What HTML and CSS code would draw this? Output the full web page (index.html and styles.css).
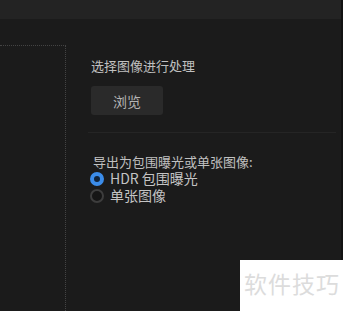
FILE: index.html
```html
<!DOCTYPE html>
<html lang="zh-CN">
<head>
    <meta charset="UTF-8">
    <title>HDR</title>
    <link rel="stylesheet" href="styles.css">
</head>
<body>
    <div class="window">
        <div class="title-bar"></div>
        <div class="main">
            <div class="preview"></div>
            <div class="options">
                <div class="label">选择图像进行处理</div>
                <button class="browse-btn">浏览</button>
                <div class="divider"></div>
                <div class="label export-label">导出为包围曝光或单张图像:</div>
                <div class="radio-row">
                    <span class="radio checked"></span>
                    <span class="radio-text">HDR 包围曝光</span>
                </div>
                <div class="radio-row">
                    <span class="radio"></span>
                    <span class="radio-text">单张图像</span>
                </div>
            </div>
        </div>
        <!-- watermark -->
        <div class="watermark">软件技巧</div>
    </div>
</body>
</html>
```

FILE: styles.css
```css
* {
    margin: 0;
    padding: 0;
    box-sizing: border-box;
}
body {
    width: 343px;
    height: 311px;
    overflow: hidden;
    background: #1b1b1b;
    font-family: "Noto Sans CJK SC", "Noto Sans", sans-serif;
    color: #c4c4c4;
}
.window {
    position: relative;
    height: 311px;
    border-right: 2px solid #121212;
}
.title-bar {
    height: 19px;
    background: #232323;
}
.main {
    display: flex;
    height: 292px;
}
.preview {
    width: 66px;
    margin-top: 26px;
    border-top: 1px dotted #444;
    border-right: 1px dotted #444;
}
.options {
    flex: 1;
    padding: 38px 5px 0 22px;
}
.label {
    padding-left: 3px;
    font-size: 13px;
    line-height: 17px;
    color: #c0c0c0;
}
.browse-btn {
    display: block;
    width: 72px;
    height: 29px;
    margin: 12px 0 0 3px;
    background: #2a2a2a;
    border: none;
    border-radius: 3px;
    font-family: inherit;
    font-size: 14px;
    color: #b4b4b4;
}
.divider {
    height: 1px;
    margin-top: 17px;
    background: #252525;
}
.export-label {
    margin-top: 20px;
    padding-left: 5px;
}
.radio-row {
    display: flex;
    align-items: center;
    gap: 6px;
    height: 17px;
    padding-left: 2px;
}
.radio {
    width: 14px;
    height: 14px;
    border-radius: 50%;
    border: 2px solid #3d3d3d;
    background: #151515;
}
.radio.checked {
    border: 4px solid #3b8ce9;
    background: #10233a;
}
.radio-text {
    font-size: 14px;
    line-height: 17px;
    color: #c4c4c4;
}
.watermark {
    position: absolute;
    left: 240px;
    top: 260px;
    width: 103px;
    height: 51px;
    background: #ffffff;
    padding: 8px 0 0 4px;
    font-size: 23px;
    line-height: 30px;
    letter-spacing: 1px;
    color: #dcdcdc;
}
```
